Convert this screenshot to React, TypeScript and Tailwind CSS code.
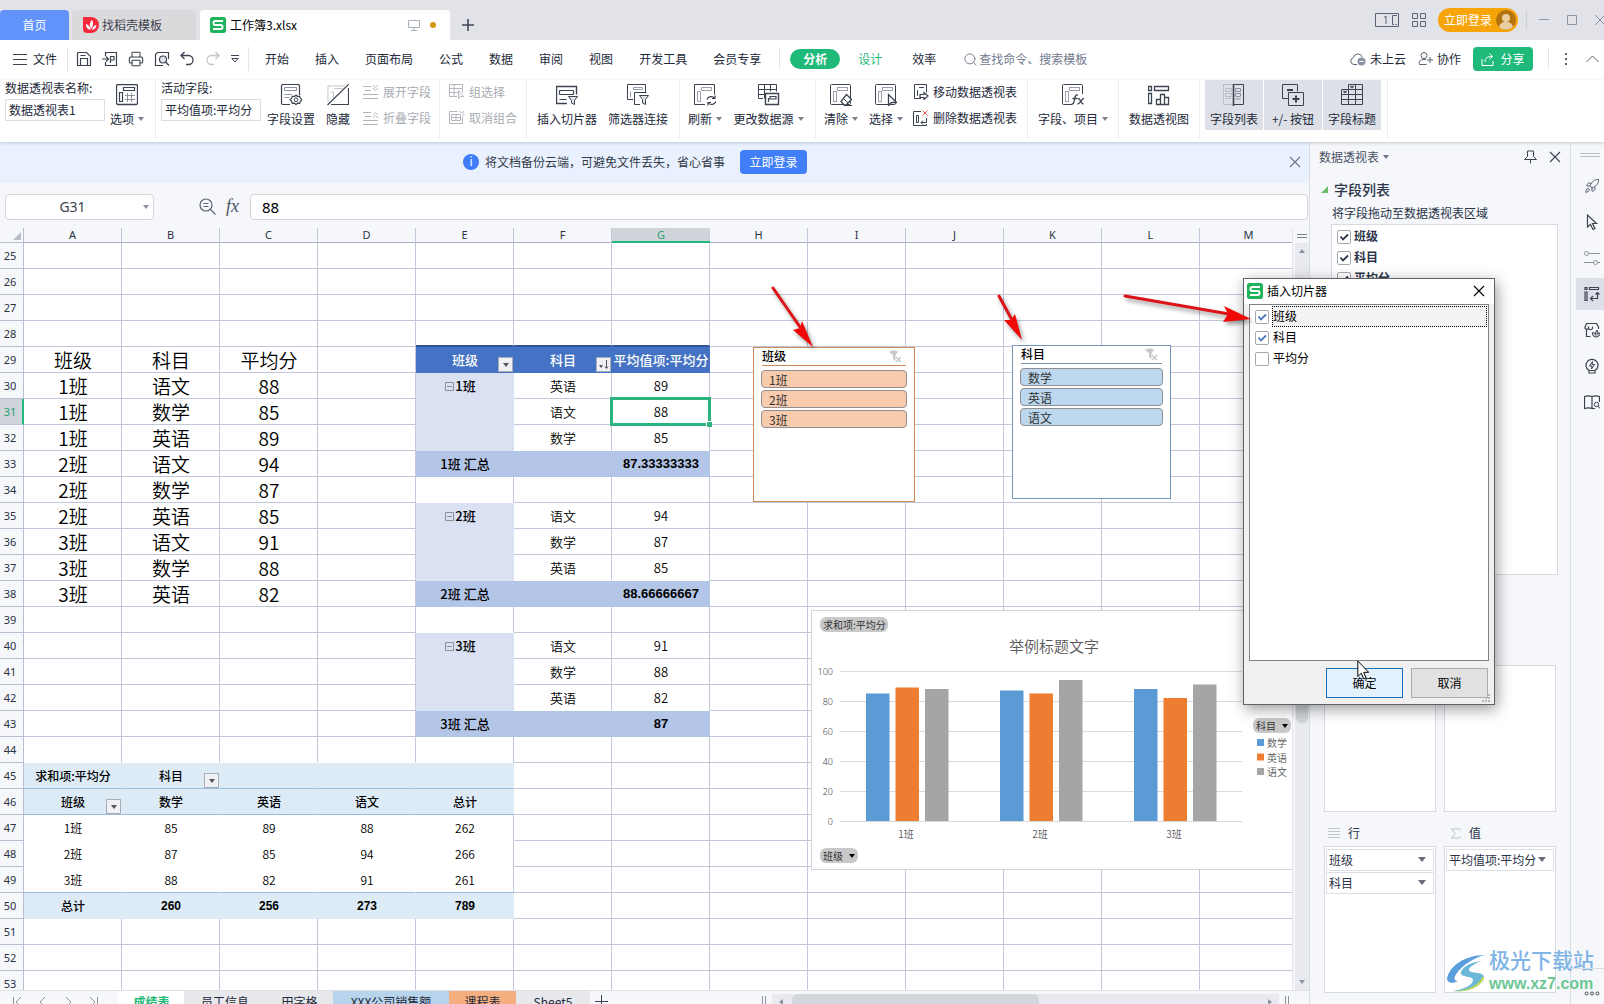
import { useState } from "react";
import type { ReactNode } from "react";
import { Printer, Rocket, Search } from "lucide-react";

const COLS = "ABCDEFGHIJKLM".split("");
const ROWS = Array.from({ length: 29 }, (_, i) => i + 25);

type Cell = { text: string; toggle?: boolean; filter?: "down" | "sort"; cls: string };

const cells: Record<string, Cell> = {};

// Source data, A29:C38
const scores = [
  ["班级", "科目", "平均分"],
  ["1班", "语文", "88"],
  ["1班", "数学", "85"],
  ["1班", "英语", "89"],
  ["2班", "语文", "94"],
  ["2班", "数学", "87"],
  ["2班", "英语", "85"],
  ["3班", "语文", "91"],
  ["3班", "数学", "88"],
  ["3班", "英语", "82"],
];
scores.forEach((row, i) =>
  row.forEach((text, j) => {
    cells[COLS[j] + (29 + i)] = { text, cls: "text-[19px] font-[350]" };
  })
);

// Pivot table with subtotals, E29:G43
cells.E29 = { text: "班级", filter: "down", cls: "text-[13px] font-medium text-white" };
cells.F29 = { text: "科目", filter: "sort", cls: "text-[13px] font-medium text-white" };
cells.G29 = { text: "平均值项:平均分", cls: "text-[13px] font-medium text-white" };
const groups = [
  { row: 30, name: "1班", avg: "87.33333333", items: [["英语", "89"], ["语文", "88"], ["数学", "85"]] },
  { row: 35, name: "2班", avg: "88.66666667", items: [["语文", "94"], ["数学", "87"], ["英语", "85"]] },
  { row: 40, name: "3班", avg: "87", items: [["语文", "91"], ["数学", "88"], ["英语", "82"]] },
];
groups.forEach((g) => {
  cells["E" + g.row] = { text: g.name, toggle: true, cls: "text-[13px] font-medium" };
  g.items.forEach(([subject, value], i) => {
    cells["F" + (g.row + i)] = { text: subject, cls: "text-[13px] font-[350]" };
    cells["G" + (g.row + i)] = { text: value, cls: "text-[13px] font-[350]" };
  });
  cells["E" + (g.row + 3)] = { text: g.name + " 汇总", cls: "text-[13px] font-medium" };
  cells["G" + (g.row + 3)] = { text: g.avg, cls: "text-[13px] font-bold font-['Liberation_Sans']" };
});

// Cross table, A45:E50
const cross = [
  ["求和项:平均分", "科目", "", "", ""],
  ["班级", "数学", "英语", "语文", "总计"],
  ["1班", "85", "89", "88", "262"],
  ["2班", "87", "85", "94", "266"],
  ["3班", "88", "82", "91", "261"],
  ["总计", "260", "256", "273", "789"],
];
cross.forEach((row, i) =>
  row.forEach((text, j) => {
    const strong = i < 2 || i === 5;
    const cls = !strong
      ? "text-xs font-[350]"
      : i === 5 && j > 0
        ? "text-xs font-bold font-['Liberation_Sans']"
        : "text-xs font-medium";
    cells[COLS[j] + (45 + i)] = { text, cls };
  })
);
cells.B45.filter = "down";
cells.A46.filter = "down";

const kindOf = (r: number, c: string) => {
  if ("EFG".includes(c)) {
    if (r === 29) return "head";
    if (r === 33 || r === 38 || r === 43) return "total";
    if (c === "E" && r >= 30 && r <= 42 && r !== 34 && r !== 39) return "side";
  }
  if ("ABCDE".includes(c)) {
    if (r === 45 || r === 46) return "pale";
    if (r === 50) return "paleEnd";
    if (r === 49) return "lastPlain";
    if (r === 47 || r === 48) return "plain";
  }
  return "";
};

const kindClass: Record<string, string> = {
  head: "bg-[#4472c4] border-[#4472c4]",
  total: "bg-[#b4c6e7] border-[#b4c6e7]",
  side: "bg-[#d9e1f2] border-[#d9e1f2]",
  pale: "bg-[#ddebf7] border-r-[#ddebf7] border-b-[#9bbbe0]",
  paleEnd: "bg-[#ddebf7] border-[#ddebf7]",
  plain: "bg-white border-white",
  lastPlain: "bg-white border-r-white border-b-[#9bbbe0]",
};

const cellClass = (r: number, c: string) => {
  const kind = kindOf(r, c);
  if (kind) {
    if (c === "E" && (kind === "plain" || kind === "lastPlain")) {
      return kind === "plain" ? "border-r-[#c3c6d8] border-b-white" : "border-r-[#c3c6d8] border-b-[#9bbbe0]";
    }
    return kindClass[kind];
  }
  if (r === 28 && "EFG".includes(c)) return "border-r-[#c3c6d8] border-b-2 border-b-[#2f5597]";
  if (kindOf(r + 1, c)) return "border-r-[#c3c6d8] border-b-white";
  return "border-[#c3c6d8]";
};

/* ---------- small shared pieces ---------- */

function Caret({ className = "" }: { className?: string }) {
  return (
    <svg width="6" height="4" viewBox="0 0 6 4" className={`shrink-0 ${className}`} fill="currentColor" aria-hidden="true">
      <path d="M0 0h6L3 4z" />
    </svg>
  );
}

function Cross() {
  return (
    <svg width="12" height="12" viewBox="0 0 12 12" stroke="currentColor" strokeWidth="1.100" aria-hidden="true">
      <path d="M1 1l10 10M11 1L1 11" />
    </svg>
  );
}

function Ico({ size = 22, children }: { size?: number; children: ReactNode }) {
  return (
    <svg width={size} height={size} viewBox={`0 0 ${size} ${size}`} fill="none" stroke="#3c4350" strokeWidth="1" className="shrink-0" aria-hidden="true">
      {children}
    </svg>
  );
}

function WpsLogo() {
  return (
    <svg width="16" height="16" viewBox="0 0 16 16" className="shrink-0" aria-hidden="true">
      <rect width="16" height="16" rx="2.500" fill="#1fb35c" />
      <path d="M13 4H5.200A1.700 1.700 0 0 0 3.500 5.700v.6A1.700 1.700 0 0 0 5.200 8h5.600a1.700 1.700 0 0 1 1.700 1.700v.6a1.700 1.700 0 0 1-1.700 1.700H3" fill="none" stroke="#fff" strokeWidth="1.900" />
    </svg>
  );
}

function PivotBase() {
  return (
    <>
      <rect x="0.500" y="0.500" width="20" height="20" rx="1" />
      <rect x="7.500" y="3.500" width="10" height="3" stroke="#9aa0ab" />
      <rect x="3.500" y="7.500" width="3" height="10" stroke="#9aa0ab" />
    </>
  );
}

function BigButton({ icon, label, caret, width, active }: { icon: ReactNode; label: string; caret?: boolean; width: string; active?: boolean }) {
  return (
    <button className={`flex h-[50px] shrink-0 flex-col items-center pt-1 ${width} ${active ? "bg-[#dde1e7]" : ""}`}>
      {icon}
      <span className="mt-[5px] flex h-4 items-center gap-1 whitespace-nowrap">
        {label}
        {caret && <Caret className="text-[#7b818c]" />}
      </span>
    </button>
  );
}

function SmallButton({ icon, label, disabled }: { icon: ReactNode; label: string; disabled?: boolean }) {
  return (
    <button disabled={disabled} className={`flex h-4 items-center gap-1 whitespace-nowrap ${disabled ? "text-[#a7abb2]" : ""}`}>
      {icon}
      {label}
    </button>
  );
}

/* ---------- title bar and menu ---------- */

function TitleBar() {
  return (
    <header className="flex h-10 shrink-0 items-end bg-[#e2e3e8]">
      <button className="h-[30px] w-[69px] rounded-t-sm bg-[#6193fb] text-white">首页</button>
      <button className="ml-[3px] flex h-[30px] w-[124px] items-center gap-[3px] rounded-t bg-[#dadadd] pl-[11px] text-[#3d4350]">
        <svg width="16" height="16" viewBox="0 0 16 16" aria-hidden="true">
          <path d="M0 0h8a8 8 0 0 1 0 16H4a4 4 0 0 1-4-4z" fill="#f5283c" />
          <path d="M7.500 13C3.500 12 3 9.500 3 7c2.500.5 4 2.500 4.500 6zM8 12C6 8 7 5 9.200 2.800 10.500 6 10.300 9.500 8 12zM9 13c.5-3 2-4.500 4.200-5 .2 2.500-1.200 4.500-4.200 5z" fill="#fff" />
        </svg>
        找稻壳模板
      </button>
      <div className="ml-1 flex h-[30px] w-[250px] items-center rounded-t bg-white pl-2.5 text-black">
        <WpsLogo />
        <span className="ml-1">工作簿3.xlsx</span>
        <svg width="12" height="12" viewBox="0 0 12 12" fill="none" stroke="#a9b0c0" className="ml-auto" aria-hidden="true">
          <path d="M.5 1.500h11v7H.5zM6 8.500v3M3 11.500h6" />
        </svg>
        <span className="mr-3.5 ml-2.5 size-1.5 rounded-full bg-[#d6960f]" />
      </div>
      <button aria-label="新建" className="ml-3 flex h-[30px] w-3 items-center text-[#41485a]">
        <svg width="12" height="12" viewBox="0 0 12 12" stroke="currentColor" strokeWidth="1.600" aria-hidden="true">
          <path d="M6 0v12M0 6h12" />
        </svg>
      </button>
      <div className="ml-auto flex h-10 shrink-0 items-center text-[#5a6274]">
        <svg width="24" height="14" viewBox="0 0 24 14" fill="none" stroke="currentColor" aria-hidden="true">
          <path d="M.5.5h23v13H.5zM9 4.500l2-1.500v8M22 2.500h-4.500v9H19M20.500 11.500h1.500" />
        </svg>
        <svg width="14" height="14" viewBox="0 0 14 14" fill="none" stroke="currentColor" className="ml-[13px]" aria-hidden="true">
          <path d="M.5.5h5v5h-5zM8.500.5h5v5h-5zM.5 8.500h5v5h-5zM8.500 8.500h5v5h-5z" />
        </svg>
        <button className="ml-3 flex h-6 w-20 items-center justify-end gap-1 rounded-full bg-[#f7a409] pr-0.5 whitespace-nowrap text-white">
          立即登录
          <svg width="20" height="20" viewBox="0 0 20 20" aria-hidden="true">
            <circle cx="10" cy="10" r="10" fill="#b5730f" />
            <circle cx="10" cy="8" r="4" fill="#e8cfa2" />
            <path d="M3 17c1-4 3.500-5 7-5s6 1 7 5a10 10 0 0 1-14 0z" fill="#e8cfa2" />
          </svg>
        </button>
        <span className="ml-2 h-5 w-px bg-[#cdd0d7]" />
        <svg width="10" height="10" viewBox="0 0 10 10" stroke="#8d93a0" className="ml-3" aria-hidden="true">
          <path d="M0 4.500h10" />
        </svg>
        <svg width="10" height="10" viewBox="0 0 10 10" fill="none" stroke="#8d93a0" className="ml-[18px]" aria-hidden="true">
          <path d="M.5.5h9v9h-9z" />
        </svg>
        <svg width="9" height="10" viewBox="0 0 9 10" fill="none" stroke="#8d93a0" className="ml-[18px]" aria-hidden="true">
          <path d="M0 0l10 10M10 0L0 10" />
        </svg>
      </div>
    </header>
  );
}

function MenuBar() {
  const menus = ["开始", "插入", "页面布局", "公式", "数据", "审阅", "视图", "开发工具", "会员专享"];
  return (
    <nav className="flex h-10 shrink-0 items-center bg-white pr-[5px] pb-0.5 pl-[13px] whitespace-nowrap">
      <button className="flex items-center gap-1.5">
        <svg width="14" height="12" viewBox="0 0 14 12" stroke="#3c4350" aria-hidden="true">
          <path d="M0 1.500h14M0 6.500h14M0 11.500h14" />
        </svg>
        文件
      </button>
      <span className="ml-2.5 h-6 w-px bg-[#e3e5e9]" />
      <div className="flex w-[171px] items-center justify-between pl-2">
        <Ico size={16}>
          <path d="M1.500 2.500a1 1 0 0 1 1-1h8l4 4v9h-13zM4.500 14.500v-7h7v7M4.500 4.500h5" strokeWidth="1.200" />
        </Ico>
        <Ico size={16}>
          <path d="M3.500 5V1.500h11v13h-11V11M0 8h6M4 5.500L6.500 8 4 10.500M8.500 12V5.500h3.500v3.500H8.500" strokeWidth="1.200" />
        </Ico>
        <Printer size={16} strokeWidth={1.6} color="#3c4350" />
        <Ico size={16}>
          <path d="M14.500 8V1.500h-11l-2 2v11H9" strokeWidth="1.200" />
          <circle cx="9" cy="8.500" r="3.500" fill="#dfe2e7" strokeWidth="1.200" />
          <path d="M11.500 11l3.500 3.500" strokeWidth="1.200" />
        </Ico>
        <Ico size={16}>
          <path d="M5.500 1L2 4.500 5.500 8M2 4.500h7.500a4.500 4.500 0 0 1 0 9H7" strokeWidth="1.300" />
        </Ico>
        <svg width="16" height="16" viewBox="0 0 16 16" fill="none" stroke="#c3c7cd" strokeWidth="1.300" aria-hidden="true">
          <path d="M10.500 1L14 4.500 10.500 8M14 4.500H6.500a4.500 4.500 0 0 0 0 9H9" />
        </svg>
        <svg width="8" height="8" viewBox="0 0 8 8" fill="none" stroke="#3c4350" aria-hidden="true">
          <path d="M0 .5h8M.8 3.500h6.400L4 7z" />
        </svg>
      </div>
      <span className="ml-[9px] h-6 w-px bg-[#e3e5e9]" />
      <div className="ml-4 flex gap-[26px]">
        {menus.map((m) => (
          <button key={m}>{m}</button>
        ))}
      </div>
      <span className="ml-[18px] h-5 w-px bg-[#e3e5e9]" />
      <button className="ml-2.5 h-5 w-[50px] rounded-full bg-[#1fb97a] font-bold text-white">分析</button>
      <button className="ml-[18px] text-[#1fb97a]">设计</button>
      <button className="ml-[30px]">效率</button>
      <button className="ml-[27px] flex items-center gap-px text-[#727a8e]">
        <Search size={15} strokeWidth={1.5} />
        查找命令、搜索模板
      </button>
      <div className="ml-auto flex items-center">
        <button className="flex items-center gap-1">
          <svg width="16" height="14" viewBox="0 0 16 14" fill="none" stroke="#5a6274" aria-hidden="true">
            <path d="M7 12.500H4a3.500 3.500 0 0 1-.5-6.900A4.500 4.500 0 0 1 12.200 5" />
            <circle cx="11.500" cy="9.500" r="4" fill="#8b93a4" stroke="none" />
            <path d="M9.500 9.500h4" stroke="#fff" />
          </svg>
          未上云
        </button>
        <button className="ml-3 flex items-center gap-1">
          <svg width="15" height="14" viewBox="0 0 15 14" fill="none" stroke="#5a6274" aria-hidden="true">
            <circle cx="6" cy="3.500" r="3" />
            <path d="M8.500 12.500H1.500c-1-2 .5-5 3.500-5h3M12 5v6M9 8h6" />
          </svg>
          协作
        </button>
        <button className="ml-3 flex h-6 w-[60px] items-center justify-center gap-1.5 rounded bg-[#1fb97a] text-white">
          <svg width="13" height="13" viewBox="0 0 13 13" fill="none" stroke="currentColor" aria-hidden="true">
            <path d="M1 6v6.500h11V8M4 9c0-4 2.500-5.500 7-5.500M8.500.5l3 3-3 3" />
          </svg>
          分享
        </button>
        <span className="ml-[15px] h-5 w-px bg-[#e3e5e9]" />
        <svg width="3" height="13" viewBox="0 0 3 13" fill="#5a6274" className="ml-4" aria-hidden="true">
          <path d="M0 0h2v2H0zM0 5h2v2H0zM0 10h2v2H0z" />
        </svg>
        <svg width="13" height="8" viewBox="0 0 13 8" fill="none" stroke="#5a6274" className="ml-[18px]" aria-hidden="true">
          <path d="M.5 7l6-6 6 6" />
        </svg>
      </div>
    </nav>
  );
}

/* ---------- ribbon ---------- */

function Field({ id, label, value }: { id: string; label: string; value: string }) {
  return (
    <div className="flex w-[100px] shrink-0 flex-col">
      <label htmlFor={id} className="h-[19px] leading-4">
        {label}
      </label>
      <input id={id} defaultValue={value} className="h-[22px] w-full border border-[#dcdee3] px-[3px] pb-0.5 outline-none" />
    </div>
  );
}

const linesIcon = (up: boolean) => (
  <svg width="16" height="16" viewBox="0 0 16 16" fill="none" stroke="#b3b6bc" aria-hidden="true">
    <path d="M0 2.500h8M2 6.500h6M0 10.500h15M0 14.500h15" />
    <path d={up ? "M10 5l2.500-2.500L15 5M10 8l2.500-2.500L15 8" : "M10 1l2.500 2.500L15 1M10 4l2.500 2.500L15 4"} />
  </svg>
);

function Ribbon() {
  const group = "flex h-[58px] shrink-0 border-r border-[#ebecef]";
  return (
    <section className="relative z-10 flex h-[62px] shrink-0 bg-white shadow-[0_1px_3px_rgba(60,70,90,0.25)]">
      <div className={`${group} w-[156px] pl-[5px]`}>
        <Field id="pivot-name" label="数据透视表名称:" value="数据透视表1" />
        <BigButton
          width="w-11"
          label="选项"
          caret
          icon={
            <Ico>
              <rect x="0.500" y="0.500" width="21" height="20" rx="1.500" strokeWidth="1.300" />
              <path d="M7.500 3.500h11v3h-11zM3.500 8.500h3v9h-3z" strokeWidth="1.200" />
              <path d="M11.500 9v9M15.500 9v9M9 11.500h10M9 15.500h10" stroke="#8d93a0" />
            </Ico>
          }
        />
      </div>
      <div className={`${group} w-[284px] pl-[5px]`}>
        <Field id="active-field" label="活动字段:" value="平均值项:平均分" />
        <BigButton
          width="w-[60px]"
          label="字段设置"
          icon={
            <Ico>
              <path d="M10 20.500H3a1.500 1.500 0 0 1-1.500-1.500V2A1.500 1.500 0 0 1 3 .5h15A1.500 1.500 0 0 1 19.500 2v9" strokeWidth="1.200" />
              <path d="M4.500 3.500h12v3h-12zM4.500 10.500h7M4.500 13.500h5" stroke="#8d93a0" />
              <path d="M16 11l1.500 1.500 2.200-.3.600 2L22 15.800l-1.700 1.500-.6 2-2.200-.2L16 20.600l-1.500-1.500-2.200.2-.6-2L10 15.800l1.700-1.600.6-2 2.200.3z" strokeWidth="1.200" />
              <circle cx="16" cy="15.800" r="1.800" />
            </Ico>
          }
        />
        <BigButton
          width="w-[34px]"
          label="隐藏"
          icon={
            <Ico>
              <path d="M1 18V2h17M7 4.500h9M3.500 8h3v7" stroke="#c4c7cd" />
              <path d="M.5 21L22 0M4 20.500h17.500V4" strokeWidth="1.200" />
            </Ico>
          }
        />
        <div className="ml-2 flex flex-col gap-2.5 pt-1">
          <SmallButton disabled label="展开字段" icon={linesIcon(false)} />
          <SmallButton disabled label="折叠字段" icon={linesIcon(true)} />
        </div>
      </div>
      <div className={`${group} w-[87px] flex-col gap-2.5 pt-1 pl-[9px]`}>
        <SmallButton
          disabled
          label="组选择"
          icon={
            <svg width="16" height="16" viewBox="0 0 16 16" fill="none" stroke="#b3b6bc" aria-hidden="true">
              <path d="M.5.5h13v8M.5.5v12H8M.5 4.500h13M5 .5v12M.5 8.500h8M9.500 6.500v8l2-2h3z" />
            </svg>
          }
        />
        <SmallButton
          disabled
          label="取消组合"
          icon={
            <svg width="16" height="16" viewBox="0 0 16 16" fill="none" stroke="#b3b6bc" aria-hidden="true">
              <path d="M.5 1.500h8M.5 1.500v12h13M2.500 4.500h9v6h-9zM7 4.500v6M2.500 7.500h9M13.500 7v6.500M11 1l1 2M15 1l-2 3M15.500 5l-2 .5" />
            </svg>
          }
        />
      </div>
      <div className={`${group} w-[153px] pl-[5px]`}>
        <BigButton
          width="w-[70px]"
          label="插入切片器"
          icon={
            <Ico>
              <path d="M11 19.500H.5v-17h20v8" strokeWidth="1.400" />
              <path d="M3.500 6.500h14M3.500 10.500h14M3.500 6.500v4M17.500 6.500v4M3.500 15.500h7" strokeWidth="1.200" />
              <path d="M12.500 12.500h9l-3 4v4l-3-1.500V16.500z" fill="#dfe2e7" />
            </Ico>
          }
        />
        <BigButton
          width="w-[72px]"
          label="筛选器连接"
          icon={
            <Ico>
              <path d="M6 15.500H.5V.5h18v8" />
              <path d="M6.500 3.500h9v2h-9zM3.500 7.500v6" stroke="#9aa0ab" />
              <path d="M13 20.500H7.500v-12h12" />
              <path d="M12.500 11.500h9l-3 4v5l-3-1.500V15.500z" fill="#dfe2e7" />
            </Ico>
          }
        />
      </div>
      <div className={`${group} w-[136px] pl-[5px]`}>
        <BigButton
          width="w-10"
          label="刷新"
          caret
          icon={
            <Ico>
              <path d="M11 20.500H.5V.5h20v10" />
              <path d="M7.500 3.500h10v3h-10zM3.500 7.500h3v10h-3z" stroke="#9aa0ab" />
              <path d="M13 15.500c1-3 5.500-4 7.500-1.500M21 11.500v3h-3M22 17.500c-1 3-5.500 4-7.500 1.500M14 21.500v-3h3" strokeWidth="1.200" />
            </Ico>
          }
        />
        <BigButton
          width="w-[87px]"
          label="更改数据源"
          caret
          icon={
            <Ico>
              <path d="M5 14.500H.5V.5h18v7M.5 5.500h18M.5 10.500h7M6.500.5v14M12.500.5v7" />
              <path d="M7.500 9.500h13v11h-13z" strokeWidth="1.400" fill="#fff" />
              <path d="M12 12.500h6v2.500h-6zM10.500 14v4" strokeWidth="1.200" />
            </Ico>
          }
        />
      </div>
      <div className={`${group} w-[212px] pl-[3px]`}>
        <BigButton
          width="w-11"
          label="清除"
          caret
          icon={
            <Ico>
              <PivotBase />
              <path d="M16.500 10.500l5 5-5.500 5.500h-2l-3-3.500z" fill="#fff" strokeWidth="1.300" />
              <path d="M13 14l5 5M14 21.500h8" />
            </Ico>
          }
        />
        <BigButton
          width="w-[46px]"
          label="选择"
          caret
          icon={
            <Ico>
              <PivotBase />
              <path d="M13.500 10.500v11l3-3h5z" fill="#fff" strokeWidth="1.300" />
            </Ico>
          }
        />
        <div className="ml-1 flex flex-col gap-2.5 pt-1">
          <SmallButton
            label="移动数据透视表"
            icon={
              <Ico size={16}>
                <path d="M8 14.500H1.500V.5h12v8M6 3.500h5M4.500 6v6" />
                <path d="M7 10.500h4v-2l4 3.500-4 3.500v-2H7z" fill="#fff" strokeWidth="1.200" />
              </Ico>
            }
          />
          <SmallButton
            label="删除数据透视表"
            icon={
              <Ico size={16}>
                <path d="M8 1.500H.5v14h13V14M3.500 5.500h2v7h-2zM8 12.500h5.500V8M10 10.500l-2 2 2 2" />
                <path d="M9.500.5l5 5M14.500.5l-5 5" stroke="#e0564f" />
              </Ico>
            }
          />
        </div>
      </div>
      <div className={`${group} w-[91px]`}>
        <BigButton
          width="w-[90px]"
          label="字段、项目"
          caret
          icon={
            <Ico>
              <PivotBase />
              <path d="M10 10h13v12H10z" fill="#fff" stroke="none" />
              <path d="M16 11c-2.500-.5-3 1.500-3.500 4.500s-1.500 5-3 4.500M10.500 14.500h5M16 14.500c3 0 2.500 5.500 5.500 5.500M22 14.500c-3 0-3.500 5.500-6.500 5.500" strokeWidth="1.300" />
            </Ico>
          }
        />
      </div>
      <div className={`${group} w-[81px]`}>
        <BigButton
          width="w-20"
          label="数据透视图"
          icon={
            <Ico>
              <path d="M.5 2.500h3v4h-3zM6.500 2.500h14v4h-14zM.5 9.500h3v10h-3zM8.500 15.500h4v5h-4zM12.500 10.500h4v10h-4zM16.500 13.500h4v7h-4z" strokeWidth="1.300" />
            </Ico>
          }
        />
      </div>
      <div className={`${group} w-[188px] gap-px pl-[5px]`}>
        <BigButton
          width="w-[58px]"
          label="字段列表"
          active
          icon={
            <Ico>
              <path d="M.5 .5h10M.5.5v20h10M2.500 4.500h6v3h-6zM2.500 9.500h6v3h-6zM2.500 14.500h6" stroke="#a9aeb8" strokeDasharray="2 1" />
              <path d="M10.500 0v22" strokeWidth="1.600" />
              <path d="M10.500.5h10v20h-10" />
              <path d="M12.500 4.500h5v3h-5zM12.500 9.500h5v3h-5zM12.500 15h5" stroke="#8d93a0" />
            </Ico>
          }
        />
        <BigButton
          width="w-[58px]"
          label="+/- 按钮"
          active
          icon={
            <Ico>
              <path d="M6 14.500H.5V.5h15v7" />
              <path d="M5 6h6" strokeWidth="2" />
              <path d="M6.500 8.500h15v13h-15z" />
              <path d="M14 11.500v7M10.500 15h7" strokeWidth="2" />
            </Ico>
          }
        />
        <BigButton
          width="w-[58px]"
          label="字段标题"
          active
          icon={
            <Ico>
              <path d="M.5 5.500h21v15H.5zM7.500.5h14v5h-14zM7.500 5.500v15M14.500.5v20M.5 10.500h21M.5 15.500h21" />
              <path d="M2.500 7l1.500 1.500L5.500 7M9.500 2L11 3.500 12.500 2" strokeWidth="1.300" />
            </Ico>
          }
        />
      </div>
    </section>
  );
}

/* ---------- sheet area ---------- */

function NoticeBar() {
  return (
    <div className="flex h-[41px] shrink-0 items-center bg-[#eaf1fe] pr-2 pb-0.5 text-[#333b4b]">
      <div className="flex flex-1 items-center justify-center pr-[19px]">
        <span className="flex size-4 items-center justify-center rounded-full bg-[#3f7df8] font-['Noto_Sans'] text-xs text-white">i</span>
        <span className="ml-1.5">将文档备份云端，可避免文件丢失，省心省事</span>
        <button className="ml-[15px] h-6 w-[67px] rounded bg-[#417ff9] text-white">立即登录</button>
      </div>
      <button aria-label="关闭提示" className="text-[#6c7485]">
        <Cross />
      </button>
    </div>
  );
}

function FormulaBar() {
  return (
    <div className="flex h-[45px] shrink-0 items-center bg-[#f5f7fa] pr-px pb-1 pl-[5px]">
      <div className="mt-1.5 flex h-[26px] w-[149px] items-center rounded-sm border border-[#d3d6dc] bg-white pr-1 pl-2">
        <input aria-label="名称框" defaultValue="G31" className="w-full min-w-0 bg-transparent pr-3 text-center font-['Noto_Sans'] text-sm text-[#3d4350] outline-none" />
        <Caret className="text-[#8d93a0]" />
      </div>
      <svg width="17" height="17" viewBox="0 0 17 17" fill="none" stroke="#5a6274" strokeWidth="1.200" className="mt-1.5 ml-[45px]" aria-hidden="true">
        <circle cx="7" cy="7" r="6" />
        <path d="M11.500 11.500l5 5M4.500 5.500h5M4.500 8.500h5" />
      </svg>
      <span className="mt-1 ml-2.5 w-6 font-['Liberation_Serif'] text-lg text-[#4d5565] italic">fx</span>
      <input aria-label="编辑栏" defaultValue="88" className="mt-1.5 h-[26px] min-w-0 flex-1 rounded-sm border border-[#d3d6dc] bg-white px-[11px] font-['Noto_Sans'] text-[15px] text-black outline-none" />
    </div>
  );
}

function FilterButton({ sort }: { sort?: boolean }) {
  return (
    <button aria-label="筛选" className="absolute right-0 bottom-0 flex size-[15px] items-center justify-center border border-[#a9adb5] bg-[#f0f1f4] text-[#555]">
      {sort ? (
        <svg width="11" height="11" viewBox="0 0 11 11" fill="#555" stroke="#555" aria-hidden="true">
          <path d="M1 6h4L3 9z" stroke="none" />
          <path d="M8.500 1v8M7 7.500L8.500 9.500 10 7.500" fill="none" />
        </svg>
      ) : (
        <Caret />
      )}
    </button>
  );
}

function Sheet() {
  return (
    <table className="w-[1298px] table-fixed border-separate border-spacing-0 bg-white text-black">
      <colgroup>
        <col className="w-6" />
        {COLS.map((c) => (
          <col key={c} className="w-[98px]" />
        ))}
      </colgroup>
      <thead>
        <tr className="h-[15px] bg-[#f5f7fa] font-['Noto_Sans'] text-[11px] leading-[14px] text-[#2b3242]">
          <th className="relative border-r border-b border-[#b9bdd0] p-0">
            <svg width="8" height="8" viewBox="0 0 8 8" fill="#b9bdc6" className="absolute right-0.5 bottom-0.5" aria-hidden="true">
              <path d="M8 0v8H0z" />
            </svg>
          </th>
          {COLS.map((c) => (
            <th
              key={c}
              className={
                c === "G"
                  ? "border-b border-[#1fb97a] bg-[#d0d3da] p-0 font-normal text-[#1fa36c] shadow-[inset_0_-1px_#1fb97a]"
                  : "border-r border-b border-r-[#c3c6d8] border-b-[#a9b0c8] p-0 font-normal"
              }
            >
              {c}
            </th>
          ))}
        </tr>
      </thead>
      <tbody>
        {ROWS.map((r) => (
          <tr key={r} className="h-[26px]">
            <th
              className={
                r === 31
                  ? "h-[26px] border-r-2 border-b border-r-[#1fb97a] border-b-[#c3c6d8] bg-[#d0d3da] p-0 pr-0.5 font-['Noto_Sans'] text-[11px] leading-none font-normal text-[#1fa36c]"
                  : "h-[26px] border-r border-b border-[#b9bdd0] bg-[#f5f7fa] p-0 pr-[3px] font-['Noto_Sans'] text-[11px] leading-none font-normal text-[#2b3242]"
              }
            >
              {r}
            </th>
            {COLS.map((c) => {
              const cell = cells[c + r];
              return (
                <td
                  key={c}
                  className={`relative h-[26px] border-r border-b py-0 text-center leading-none whitespace-nowrap ${cell?.toggle ? "pr-2 pl-0" : "pr-0 pl-px"} ${cellClass(r, c)} ${cell ? cell.cls : ""}`}
                >
                  {cell?.toggle && (
                    <svg width="9" height="9" viewBox="0 0 9 9" fill="none" stroke="#8a8f9b" className="mr-px inline-block align-baseline" aria-hidden="true">
                      <path d="M.5.5h8v8h-8zM2 4.500h5" />
                    </svg>
                  )}
                  {cell?.text}
                  {cell?.filter && <FilterButton sort={cell.filter === "sort"} />}
                  {c + r === "G31" && (
                    <span className="absolute -inset-x-0.5 -inset-y-0.5 z-10 border-3 border-[#2db380]">
                      <span className="absolute -right-1 -bottom-1 size-[6px] border-t border-l border-white bg-[#2db380]" />
                    </span>
                  )}
                </td>
              );
            })}
          </tr>
        ))}
      </tbody>
    </table>
  );
}

function Slicer({ title, items, box, line, item }: { title: string; items: string[]; box: string; line: string; item: string }) {
  return (
    <div className={`absolute border bg-white px-[7px] pt-px ${box}`}>
      <div className={`mx-px flex h-[17px] items-center border-b pb-0.5 ${line}`}>
        <h3 className="font-medium text-black">{title}</h3>
        <svg width="13" height="13" viewBox="0 0 13 13" className="mr-1 ml-auto" fill="#c9c9c9" aria-hidden="true">
          <path d="M0 2c2-2 8-2 9 0L6.500 5v6L4 9V5z" />
          <path d="M7 7l5 5M12 7l-5 5" stroke="#c9c9c9" strokeWidth="1.500" />
        </svg>
      </div>
      <div className="mt-1 flex flex-col gap-0.5">
        {items.map((t) => (
          <button key={t} className={`h-[18px] rounded-[4px] border border-[#8f8f94] px-[7px] text-left leading-[15px] text-[#333] ${item}`}>
            {t}
          </button>
        ))}
      </div>
    </div>
  );
}

const series = [
  { name: "数学", color: "#5b9bd5", values: [85, 87, 88] },
  { name: "英语", color: "#ed7d31", values: [89, 85, 82] },
  { name: "语文", color: "#a5a5a5", values: [88, 94, 91] },
];

function ChartChip({ label, caret, place }: { label: string; caret?: boolean; place: string }) {
  return (
    <button className={`absolute flex h-[15px] items-center justify-between rounded-[6px] bg-[#c9c9c9] px-[3px] text-[10px] leading-none whitespace-nowrap text-[#333] ${place}`}>
      {label}
      {caret && <Caret className="text-black" />}
    </button>
  );
}

function PivotChart() {
  return (
    <div className="absolute top-[382px] left-[811px] h-[260px] w-[482px] border border-[#d0d2dc] bg-white">
      <svg width="480" height="258" viewBox="0 0 480 258" fontFamily="'Noto Sans CJK SC', sans-serif" fontWeight="350" role="img" aria-label="举例标题文字">
        <text x="242" y="41" fontSize="15" fill="#595959" textAnchor="middle">
          举例标题文字
        </text>
        {[0, 20, 40, 60, 80, 100].map((v) => (
          <g key={v}>
            <path d={`M28 ${210.5 - v * 1.5}h402`} stroke="#d9d9d9" />
            <text x="21" y={214 - v * 1.5} fontSize="9" fill="#404040" textAnchor="end" fontFamily="'Noto Sans', sans-serif">
              {v}
            </text>
          </g>
        ))}
        {["1班", "2班", "3班"].map((name, i) => (
          <g key={name}>
            {series.map((s, j) => (
              <rect key={s.name} x={54 + i * 134 + j * 29.5} y={210 - s.values[i] * 1.5} width="23.500" height={s.values[i] * 1.5} fill={s.color} />
            ))}
            <text x={94 + i * 134} y="227" fontSize="10" fill="#595959" textAnchor="middle">
              {name}
            </text>
          </g>
        ))}
        {series.map((s, j) => (
          <g key={s.name}>
            <rect x="445" y={128 + j * 14.5} width="7" height="7" fill={s.color} />
            <text x="455" y={136 + j * 14.5} fontSize="10" fill="#595959">
              {s.name}
            </text>
          </g>
        ))}
      </svg>
      <ChartChip label="求和项:平均分" place="top-1.5 left-2 w-[68px]" />
      <ChartChip label="班级" caret place="top-[237px] left-2 w-[38px]" />
      <ChartChip label="科目" caret place="top-[107px] left-[441px] w-[38px]" />
    </div>
  );
}

function Arrow({ box, w, h, line, head }: { box: string; w: number; h: number; line: string; head: string }) {
  return (
    <svg width={w} height={h} viewBox={`0 0 ${w} ${h}`} className={`pointer-events-none absolute overflow-visible drop-shadow-[2px_3px_2px_rgba(0,0,0,0.4)] ${box}`} aria-hidden="true">
      <path d={line} stroke="#dd1318" strokeWidth="3" strokeLinecap="round" />
      <path d={head} fill="#f00808" />
    </svg>
  );
}

function VerticalScroll() {
  return (
    <div className="flex w-[17px] shrink-0 flex-col border-l border-[#e3e5ea] bg-[#f5f7fa] pl-0.5">
      <div className="flex h-[15px] items-center justify-center">
        <svg width="10" height="4" viewBox="0 0 10 4" stroke="#7b818c" aria-hidden="true">
          <path d="M0 .5h10M0 3.500h10" />
        </svg>
      </div>
      <div className="flex flex-1 flex-col items-center bg-[#e8eaef] py-1.5 text-[#8d93a0]">
        <Caret className="rotate-180" />
        <span className="mt-[298px] h-[172px] w-3 rounded-full bg-[#d0d3d9]" />
        <Caret className="mt-auto" />
      </div>
    </div>
  );
}

function SheetTabs() {
  const tabs = [
    { name: "成绩表", cls: "w-[67px] bg-white pl-0.5 font-bold text-[#1fb97a]" },
    { name: "员工信息", cls: "w-[82px] bg-[#e6e8ec]" },
    { name: "田字格", cls: "w-[67px] bg-[#e6e8ec]" },
    { name: "XXX公司销售额", cls: "w-[116px] bg-[#b7d4ec]" },
    { name: "课程表", cls: "w-[67px] bg-[#f4ae80]" },
    { name: "Sheet5", cls: "w-[74px] bg-[#e6e8ec]" },
  ];
  return (
    <div className="h-3.5 shrink-0 overflow-hidden border-t border-[#dfe1e6] bg-[#f5f7fa]">
      <div className="flex h-[21px] items-center pr-2">
        <svg width="100" height="10" viewBox="0 0 100 10" fill="none" stroke="#8d93a0" className="mr-[5px] ml-3" aria-hidden="true">
          <path d="M1.500 0v10M9 0L4 5l5 5M33 0l-5 5 5 5M54 0l5 5-5 5M78 0l5 5-5 5M85.500 0v10" />
        </svg>
        {tabs.map((t) => (
          <button key={t.name} className={`h-[21px] shrink-0 text-center whitespace-nowrap ${t.cls}`}>
            {t.name}
          </button>
        ))}
        <button aria-label="新建工作表" className="ml-[5px] shrink-0">
          <svg width="13" height="13" viewBox="0 0 13 13" stroke="#3d4350" aria-hidden="true">
            <path d="M6.500 0v13M0 6.500h13" />
          </svg>
        </button>
        <span className="ml-auto h-3 w-1 shrink-0 border-x border-[#8d93a0]" />
        <div className="mx-1.5 flex h-4 w-[507px] shrink-0 items-center justify-between bg-[#e8eaef] px-1.5 text-[#8d93a0]">
          <Caret className="rotate-90" />
          <span className="mr-auto ml-2 h-4 w-[247px] rounded-md bg-[#d3d6da]" />
          <Caret className="-rotate-90" />
        </div>
        <span className="mr-3 h-3 w-1 shrink-0 border-x border-[#8d93a0]" />
      </div>
    </div>
  );
}

/* ---------- task pane ---------- */

function Check({ id, label, tone, defaultChecked, className = "" }: { id: string; label: string; tone: string; defaultChecked?: boolean; className?: string }) {
  const [checked, setChecked] = useState(!!defaultChecked);
  return (
    <div className={`flex h-[21px] items-center gap-[3px] ${className}`}>
      <span className="relative size-3.5 shrink-0">
        <input id={id} type="checkbox" checked={checked} onChange={(e) => setChecked(e.target.checked)} className="block size-3.5 appearance-none rounded-[2px] border border-[#a5a8ae] bg-white" />
        {checked && (
          <svg width="14" height="14" viewBox="0 0 14 14" fill="none" strokeWidth="1.800" className={`pointer-events-none absolute inset-0 ${tone}`} aria-hidden="true">
            <path d="M3.500 6.500L6 9.500l5-5" />
          </svg>
        )}
      </span>
      <label htmlFor={id} className="flex flex-1 items-center pb-px">
        {label}
      </label>
    </div>
  );
}

function AreaItem({ label }: { label: string }) {
  return (
    <button className="flex h-[22px] w-full items-center justify-between border border-[#dcdfe5] pr-[7px] pb-px pl-0.5 whitespace-nowrap">
      {label}
      <svg width="8" height="5" viewBox="0 0 8 5" fill="#666c78" className="shrink-0" aria-hidden="true">
        <path d="M0 0h8L4 5z" />
      </svg>
    </button>
  );
}

function TaskPane() {
  return (
    <aside className="flex w-[261px] shrink-0 flex-col border-l border-[#dadde4] bg-[#f5f7fa] px-3 text-[#2b3448]">
      <div className="-mx-[3px] flex h-[30px] shrink-0 items-center">
        <button className="flex items-center gap-1 text-[#4a5266]">
          数据透视表
          <Caret className="text-[#6c7485]" />
        </button>
        <button aria-label="固定" className="ml-auto">
          <svg width="13" height="14" viewBox="0 0 13 14" fill="none" stroke="#3d4350" aria-hidden="true">
            <path d="M3.500 1h6v5.500l3 3H.5l3-3zM6.500 9.500V13.500" />
          </svg>
        </button>
        <button aria-label="关闭窗格" className="ml-3 text-[#3d4350]">
          <Cross />
        </button>
      </div>
      <h2 className="mt-[7px] -ml-px flex h-5 shrink-0 items-center gap-1.5 text-sm font-medium">
        <svg width="7" height="7" viewBox="0 0 8 8" fill="#6cbf6a" aria-hidden="true">
          <path d="M8 0v8H0z" />
        </svg>
        字段列表
      </h2>
      <p className="ml-2.5 h-[25px] shrink-0 pt-1 leading-5">将字段拖动至数据透视表区域</p>
      <div className="ml-[9px] h-[351px] shrink-0 border border-[#d7dae0] bg-white pt-px pl-[5px] font-bold">
        <Check id="field-class" label="班级" tone="stroke-[#2b3448]" defaultChecked />
        <Check id="field-subject" label="科目" tone="stroke-[#2b3448]" defaultChecked />
        <Check id="field-avg" label="平均分" tone="stroke-[#2b3448]" defaultChecked />
      </div>
      <div className="mt-[90px] grid shrink-0 grid-cols-2 gap-x-2 pr-0.5 pl-0.5">
        <div className="h-[147px] border border-[#d7dae0] bg-white" />
        <div className="h-[147px] border border-[#d7dae0] bg-white" />
        <h3 className="flex h-[34px] items-center gap-2 pt-2 pl-1">
          <svg width="12" height="10" viewBox="0 0 12 10" stroke="#bfc3ca" aria-hidden="true">
            <path d="M0 .5h12M0 3.500h12M0 6.500h12M0 9.500h12" />
          </svg>
          行
        </h3>
        <h3 className="flex h-[34px] items-center gap-2 pt-2 pl-1.5">
          <svg width="11" height="11" viewBox="0 0 11 11" fill="none" stroke="#bfc3ca" aria-hidden="true">
            <path d="M10 2.500V1H1l4.500 4.500L1 10h9V8.500" />
          </svg>
          值
        </h3>
        <div className="flex h-[147px] flex-col gap-px border border-[#d7dae0] bg-white px-px pt-0.5">
          <AreaItem label="班级" />
          <AreaItem label="科目" />
        </div>
        <div className="h-[147px] border border-[#d7dae0] bg-white px-px pt-0.5">
          <AreaItem label="平均值项:平均分" />
        </div>
      </div>
    </aside>
  );
}

function RailButton({ label, active, children }: { label: string; active?: boolean; children: ReactNode }) {
  return (
    <button aria-label={label} className={`my-0.5 flex h-8 w-7 items-center justify-center pl-1 ${active ? "bg-[#dcdfe7]" : ""}`}>
      {children}
    </button>
  );
}

function SideRail() {
  return (
    <aside className="flex w-[34px] shrink-0 flex-col items-end border-l border-[#dadde4] bg-[#f5f7fa]">
      <div className="flex h-[26px] w-7 items-center justify-center">
        <svg width="20" height="4" viewBox="0 0 20 4" stroke="#b9bdc6" aria-hidden="true">
          <path d="M0 .5h20M0 3.500h20" />
        </svg>
      </div>
      <RailButton label="快捷">
        <Rocket size={16} strokeWidth={1.5} color="#5a6274" />
      </RailButton>
      <RailButton label="选择">
        <Ico size={16}>
          <path d="M3.500 1v12l3-2.500 2.500 5 2-1-2.500-5h4z" strokeWidth="1.200" />
        </Ico>
      </RailButton>
      <RailButton label="属性">
        <Ico size={16}>
          <g stroke="#8d93a0">
            <circle cx="2.500" cy="3.500" r="2" />
            <path d="M4.500 3.500H16M0 12.500h9.500M13.500 12.500H16" />
            <circle cx="11.500" cy="12.500" r="2" />
          </g>
        </Ico>
      </RailButton>
      <RailButton label="数据透视表" active>
        <Ico size={16}>
          <path d="M1 1.500h2v2H1zM5.500 1.500h9v2h-9zM1 6h2v8.500H1zM7 12.500h6.500V6.500M9 10l-2.500 2.500L9 15M11.500 8.500l2-2 2 2" strokeWidth="1.200" />
        </Ico>
      </RailButton>
      <RailButton label="美化">
        <Ico size={16}>
          <path d="M2.500 7v7.500H6.500M1 5l1.500-3.500h10L14.500 5v2M1 5c-.5 2 2 3 3.500 1.500v-2M4.500 6.500c1 1.500 3 1.500 4 0v-2" strokeWidth="1.200" />
          <path d="M12 15c-3-.5-4-2-3.500-4.500 1.500 0 2 .5 3 2 0-2 .5-3.500 1.500-4.500 1 1 1 2.500.5 4 .5-.5 1.500-1 2.500-1 0 2.500-1.500 4-4 4z" fill="#3c4350" fillOpacity="0.300" />
        </Ico>
      </RailButton>
      <RailButton label="智能">
        <Ico size={16}>
          <path d="M5 12.500a6 6 0 1 1 6 0V15H5zM5 12.500h6" strokeWidth="1.200" />
          <path d="M8.500 3.500L5.500 8H8l-.5 3 3-4.500H8z" />
        </Ico>
      </RailButton>
      <RailButton label="查阅">
        <Ico size={16}>
          <path d="M.5 2.500c3-1 5-1 7.500 0v12c-2.500-1-4.500-1-7.500 0zM8 2.500c2.500-1 4.500-1 7.500 0V8M8 14.500h3" strokeWidth="1.200" />
          <circle cx="12.500" cy="10.500" r="2.200" />
          <path d="M14 12l2 2.500" />
        </Ico>
      </RailButton>
      <div className="relative z-30 mt-auto flex h-9 w-full items-end justify-end border-t border-[#dadde4] pr-1 pb-2">
        <svg width="16" height="5" viewBox="0 0 16 5" fill="#fff" stroke="#3d4350" aria-hidden="true">
          <circle cx="2.500" cy="2.500" r="1.500" />
          <circle cx="8" cy="2.500" r="1.500" />
          <circle cx="13.500" cy="2.500" r="1.500" />
        </svg>
      </div>
    </aside>
  );
}

/* ---------- dialog ---------- */

function SlicerDialog() {
  return (
    <div role="dialog" aria-label="插入切片器" className="absolute top-[278px] right-[109px] z-20 flex h-[427px] w-[252px] flex-col border border-[#5f6368] bg-[#f0f0f0] text-black shadow-[2px_4px_14px_rgba(0,0,0,0.4)]">
      <div className="flex h-[25px] shrink-0 items-center bg-white pr-[9px] pb-px pl-[3px]">
        <WpsLogo />
        <span className="ml-1">插入切片器</span>
        <button aria-label="关闭" className="ml-auto">
          <Cross />
        </button>
      </div>
      <div className="mx-[5px] flex-1 border border-[#7f8288] bg-white px-px pt-px pl-[5px]">
        <Check id="slicer-class" label="班级" tone="stroke-[#4a78c0]" defaultChecked className="[&_label]:h-[21px] [&_label]:border [&_label]:border-dotted [&_label]:border-black [&_label]:bg-[#f3f3f3]" />
        <Check id="slicer-subject" label="科目" tone="stroke-[#4a78c0]" defaultChecked className="[&_label]:pl-px" />
        <Check id="slicer-avg" label="平均分" tone="stroke-[#4a78c0]" className="[&_label]:pl-px" />
      </div>
      <div className="flex h-[43px] shrink-0 justify-end gap-2 pt-[7px] pr-1.5">
        <button className="h-[30px] w-[77px] border border-[#1b6fc0] bg-[#e3f1fc] pb-px">确定</button>
        <button className="h-[30px] w-[77px] border border-[#adadad] bg-[#e1e1e1] pb-px">取消</button>
      </div>
      <svg width="8" height="8" viewBox="0 0 8 8" fill="#b5b5b5" className="absolute right-1 bottom-0.5" aria-hidden="true">
        <path d="M6 0h2v2H6zM3 3h2v2H3zM6 3h2v2H6zM0 6h2v2H0zM3 6h2v2H3zM6 6h2v2H6z" />
      </svg>
      <svg width="13" height="20" viewBox="0 0 13 20" fill="#fff" stroke="#000" className="pointer-events-none absolute top-[381px] left-[113px]" aria-hidden="true">
        <path d="M.8 1v15.500l3.500-3.300 2.400 5.600 2.400-1-2.400-5.500h5z" />
      </svg>
    </div>
  );
}

function Watermark() {
  return (
    <div className="pointer-events-none absolute right-2.5 bottom-2 z-20 flex items-center gap-0.5 leading-none" aria-hidden="true">
      <svg width="42" height="40" viewBox="0 0 42 40">
        <path d="M40 2C20 2 4 13 2 26c0 4 6 5 11 2-5 0-4-4-1-8C18 12 28 5 40 2z" fill="#5a9fdc" />
        <path d="M37 8C24 9 15 16 16 21c1 3 12 2 12 6 0 5-9 9-20 11 14 2 30-5 31-14 0-6-15-3-15-7 0-3 6-7 13-9z" fill="#6cb8d8" />
        <path d="M39 24c-1 9-16 16-31 14 14 0 27-6 29-14z" fill="#c3d94e" />
      </svg>
      <span className="flex flex-col items-start gap-0.5">
        <span className="text-[21px] font-medium text-[#7fb4e6]">极光下载站</span>
        <span className="font-['Liberation_Sans'] text-base font-bold text-[#6cc795]">www.xz7.com</span>
      </span>
    </div>
  );
}

export default function App() {
  return (
    <div className="relative flex h-screen flex-col overflow-hidden bg-[#f5f7fa] font-['Noto_Sans_CJK_SC',sans-serif] text-xs text-[#23293a]">
      <TitleBar />
      <MenuBar />
      <Ribbon />
      <main className="flex min-h-0 flex-1">
        <section className="flex min-w-0 flex-1 flex-col">
          <NoticeBar />
          <FormulaBar />
          <div className="flex min-h-0 flex-1">
            <div className="relative min-w-0 flex-1 overflow-hidden">
              <Sheet />
              <Slicer title="班级" items={["1班", "2班", "3班"]} box="top-[119px] left-[753px] h-[155px] w-[162px] border-[#d08a56]" line="border-[#d08a56]" item="bg-[#f8cbad]" />
              <Slicer title="科目" items={["数学", "英语", "语文"]} box="top-[117px] left-[1012px] h-[154px] w-[159px] border-[#7396b8]" line="border-[#7396b8]" item="bg-[#bdd7ee]" />
              <PivotChart />
              <Arrow box="top-[59px] left-[772px]" w={42} h={62} line="M1 1L28 40" head="M41 60L21 43l7-2 2-7z" />
              <Arrow box="top-[67px] left-[998px]" w={26} h={46} line="M1 1L14 25" head="M24 45L6 25l7 0 4-6z" />
            </div>
            <VerticalScroll />
          </div>
          <SheetTabs />
        </section>
        <TaskPane />
        <SideRail />
      </main>
      <SlicerDialog />
      <Arrow box="top-[295px] right-[352px] z-30" w={128} h={26} line="M1 1L105 19" head="M127 24L99 27l5-8-4-8z" />
      <Watermark />
    </div>
  );
}
